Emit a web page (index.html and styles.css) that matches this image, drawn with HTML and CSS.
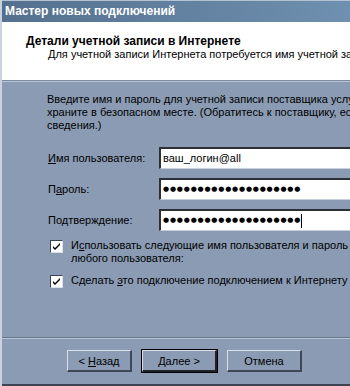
FILE: index.html
```html
<!DOCTYPE html>
<html lang="ru">
<head>
    <meta charset="UTF-8">
    <title>Мастер новых подключений</title>
    <link rel="stylesheet" href="styles.css">
</head>
<body>
    <div class="window">
        <div class="titlebar">Мастер новых подключений</div>

        <div class="header">
            <div class="header-title">Детали учетной записи в Интернете</div>
            <div class="header-sub">Для учетной записи Интернета потребуется имя учетной записи и пароль.</div>
        </div>

        <div class="content">
            <p class="intro">Введите имя и пароль для учетной записи поставщика услуг Интернета, запишите их и<br>
                храните в безопасном месте. (Обратитесь к поставщику, если вы забыли эти<br>
                сведения.)</p>

            <div class="form-row">
                <label class="form-label"><u>И</u>мя пользователя:</label>
                <div class="field">ваш_логин@all</div>
            </div>
            <div class="form-row">
                <label class="form-label">П<u>а</u>роль:</label>
                <div class="field"><span class="dots">●●●●●●●●●●●●●●●●●●●●</span></div>
            </div>
            <div class="form-row">
                <label class="form-label">Подтверждение:</label>
                <div class="field"><span class="dots">●●●●●●●●●●●●●●●●●●●●</span><span class="caret"></span></div>
            </div>

            <div class="check-row">
                <span class="checkbox">
                    <svg width="9" height="9" viewBox="0 0 9 9"><path d="M1 4 L3 6 L8 1 L8 3 L3 8 L1 6 Z" fill="#000"/></svg>
                </span>
                <span class="check-text">И<u>с</u>пользовать следующие имя пользователя и пароль при подключении<br>
                    любого пользователя:</span>
            </div>
            <div class="check-row">
                <span class="checkbox">
                    <svg width="9" height="9" viewBox="0 0 9 9"><path d="M1 4 L3 6 L8 1 L8 3 L3 8 L1 6 Z" fill="#000"/></svg>
                </span>
                <span class="check-text">Сделать <u>э</u>то подключение подключением к Интернету по умолчанию</span>
            </div>
        </div>

        <div class="footer">
            <button class="btn btn-back">&lt; <u>Н</u>азад</button>
            <button class="btn btn-default"><u>Д</u>алее &gt;</button>
            <button class="btn">Отмена</button>
        </div>
    </div>
</body>
</html>
```

FILE: styles.css
```css
html, body {
    margin: 0;
    padding: 0;
    width: 350px;
    height: 386px;
    overflow: hidden;
}
body {
    font-family: "Liberation Sans", Arial, sans-serif;
    font-size: 11px;
    color: #000;
}
.window {
    height: 386px;
    display: flex;
    flex-direction: column;
    background: #8a9bb3;
    border-left: 2px solid #c9d3df;
    box-sizing: border-box;
    overflow: hidden;
}
.titlebar {
    height: 21px;
    border-top: 1px solid #b3c2d3;
    background: linear-gradient(to right, #55708f, #6f90b0);
    color: #fff;
    font-weight: bold;
    font-size: 12px;
    line-height: 20px;
    padding-left: 3px;
    white-space: nowrap;
}
.header {
    height: 59px;
    background: #fff;
    box-sizing: border-box;
    padding-top: 13px;
    border-bottom: 1px solid #7b8aa0;
    white-space: nowrap;
}
.header-title {
    font-weight: bold;
    font-size: 12px;
    line-height: 13px;
    padding-left: 24px;
}
.header-sub {
    line-height: 13px;
    padding-left: 46px;
}
.content {
    flex: 1;
    padding: 11px 0 0 45px;
    border-top: 1px solid #b8c5d5;
}
.intro {
    margin: 0;
    line-height: 13px;
    white-space: nowrap;
}
.form-row {
    display: flex;
    align-items: center;
    margin-top: 9px;
}
.form-row:first-of-type {
    margin-top: 15px;
}
.form-label {
    width: 111px;
    flex-shrink: 0;
    padding-left: 1px;
}
.field {
    height: 22px;
    width: 260px;
    flex-shrink: 0;
    box-sizing: border-box;
    background: #fff;
    border-top: 2px solid #2b2f36;
    border-left: 2px solid #2b2f36;
    border-bottom: 1px solid #c6d0dc;
    padding-left: 2px;
    line-height: 19px;
    white-space: nowrap;
    display: flex;
    align-items: center;
}
.dots {
    font-family: "DejaVu Sans", sans-serif;
    font-size: 7px;
    letter-spacing: 0.8px;
}
.caret {
    display: inline-block;
    width: 1px;
    height: 14px;
    background: #000;
}
.check-row {
    display: flex;
    align-items: flex-start;
    margin-top: 8px;
    padding-left: 3px;
}
.check-row + .check-row {
    margin-top: 9px;
}
.checkbox {
    width: 11px;
    height: 11px;
    flex-shrink: 0;
    margin-top: 1px;
    margin-right: 8px;
    background: #fff;
    border-top: 1px solid #3a4150;
    border-left: 1px solid #3a4150;
    border-right: 1px solid #d8e0ea;
    border-bottom: 1px solid #d8e0ea;
    display: flex;
    align-items: center;
    justify-content: center;
}
.check-text {
    line-height: 13px;
    white-space: nowrap;
}
.footer {
    border-top: 1px solid #66768c;
    box-shadow: inset 0 1px 0 #b8c5d5;
    padding: 12px 0 12px 65px;
    display: flex;
    gap: 10px;
    border-bottom: 2px solid #3d4552;
}
.btn {
    height: 22px;
    width: 75px;
    padding: 0;
    font-family: "Liberation Sans", Arial, sans-serif;
    font-size: 11px;
    color: #000;
    background: #8a9bb3;
    border-top: 1px solid #d6dee8;
    border-left: 1px solid #d6dee8;
    border-right: 2px solid #3f4857;
    border-bottom: 2px solid #3f4857;
}
.btn-back {
    width: 65px;
}
.btn-default {
    outline: 1px solid #000;
    outline-offset: 0;
    border-right: 2px solid #1f242c;
    border-bottom: 2px solid #1f242c;
}
```
